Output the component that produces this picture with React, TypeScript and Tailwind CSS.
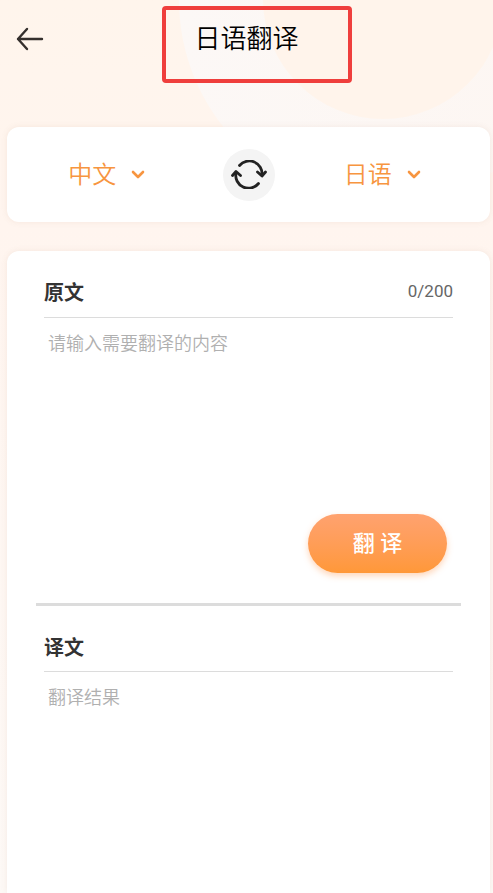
import { useState } from 'react';

const LANGUAGES = ['中文', '日语', '英语', '韩语'];
const MAX_LENGTH = 200;

interface LanguageSelectProps {
  label: string;
  value: string;
  onChange: (value: string) => void;
}

function LanguageSelect({ label, value, onChange }: LanguageSelectProps) {
  return (
    <div className="relative flex items-center">
      <select
        aria-label={label}
        value={value}
        onChange={(e) => onChange(e.target.value)}
        className="w-[77px] appearance-none bg-transparent text-2xl font-[350] text-[#f79540] focus:outline-none"
      >
        {LANGUAGES.map((language) => (
          <option key={language} value={language}>
            {language}
          </option>
        ))}
      </select>
      <svg viewBox="0 0 14 9" fill="none" className="pointer-events-none absolute right-0 w-3.5" aria-hidden="true">
        <path d="M2 2l5 5 5-5" stroke="#f79540" strokeWidth="2.6" strokeLinecap="round" strokeLinejoin="round" />
      </svg>
    </div>
  );
}

export default function App() {
  const [source, setSource] = useState('中文');
  const [target, setTarget] = useState('日语');
  const [text, setText] = useState('');

  const swapLanguages = () => {
    setSource(target);
    setTarget(source);
  };

  return (
    <div className="relative flex min-h-screen flex-col overflow-hidden bg-linear-to-b from-[#fff5ec] via-[#fff5ef] via-25% to-[#fdf9f6] font-['Roboto','Noto_Sans_CJK_SC',sans-serif]">
      {/* Background circles */}
      <svg className="pointer-events-none absolute top-0 right-0 h-52 w-80" viewBox="0 0 320 208" aria-hidden="true">
        <defs>
          <linearGradient id="halo" x1="0" y1="0" x2="1" y2="0">
            <stop offset="0" stopColor="#fcf8f6" />
            <stop offset="1" stopColor="#fdf6f2" />
          </linearGradient>
        </defs>
        <circle cx="210" cy="0" r="204" fill="url(#halo)" />
        <circle cx="210" cy="-1" r="120" fill="#fff4eb" />
      </svg>

      {/* Header */}
      <header className="relative grid h-[78px] grid-cols-[1fr_auto_1fr] items-center px-4">
        <button type="button" aria-label="返回" className="w-7">
          <svg viewBox="0 0 28 24" fill="none" stroke="#35302d" strokeWidth="2.4" strokeLinecap="round" strokeLinejoin="round">
            <path d="M11 2L2 12l9 10M2 12h24" />
          </svg>
        </button>
        <div className="relative">
          <h1 className="text-[26px] leading-8 font-[350] text-black">日语翻译</h1>
          <div className="pointer-events-none absolute -top-[17px] -right-[53px] -bottom-7 -left-8 rounded-sm border-4 border-[#ef3e3c]" />
        </div>
      </header>

      <main className="relative flex flex-1 flex-col gap-[29px] pt-[49px] pr-[3px] pl-[7px]">
        {/* Language bar */}
        <section className="grid h-[95px] grid-cols-[1fr_auto_1fr] items-center rounded-xl bg-white shadow-[0_0_6px_rgba(160,110,80,0.1)]">
          <div className="flex justify-center pr-4">
            <LanguageSelect label="源语言" value={source} onChange={setSource} />
          </div>
          <button
            type="button"
            aria-label="交换语言"
            onClick={swapLanguages}
            className="flex size-13 items-center justify-center rounded-full bg-[#f4f4f4]"
          >
            <svg viewBox="0 0 36 29" fill="none" stroke="#222" strokeWidth="2.8" strokeLinecap="round" strokeLinejoin="round" className="w-9">
              <path d="M8.500 5.500A12.800 12.800 0 0 1 31 15" />
              <path d="M26.500 12L31 16L34.500 12" />
              <path d="M27.500 23.500A12.800 12.800 0 0 1 5 13" />
              <path d="M1.500 15.500L5 11.500L9.500 15.500" />
            </svg>
          </button>
          <div className="flex justify-center">
            <LanguageSelect label="目标语言" value={target} onChange={setTarget} />
          </div>
        </section>

        {/* Translation card */}
        <section className="flex-1 rounded-t-xl bg-white px-[29px] pt-6 shadow-[0_0_6px_rgba(160,110,80,0.1)]">
          <div className="px-2">
            <div className="flex h-[43px] items-start justify-between border-b border-[#dcdcdc]">
              <label htmlFor="source" className="text-xl leading-9 font-bold text-[#333]">
                原文
              </label>
              <span className="text-[17px] leading-8 text-[#666]">
                {text.length}/{MAX_LENGTH}
              </span>
            </div>
            <textarea
              id="source"
              maxLength={MAX_LENGTH}
              value={text}
              onChange={(e) => setText(e.target.value)}
              placeholder="请输入需要翻译的内容"
              className="block h-[196px] w-full resize-none px-1 py-3 text-lg font-[350] text-[#333] placeholder:text-[#b0b0b0] focus:outline-none"
            />
            <div className="flex justify-end pr-1.5">
              <button
                type="button"
                className="h-[59px] w-[139px] rounded-full bg-linear-to-b from-[#ffa26f] to-[#ff9838] text-[22px] font-medium text-white shadow-[0_3px_6px_rgba(255,140,60,0.35)]"
              >
                翻 译
              </button>
            </div>
          </div>

          <hr className="mt-[30px] border-t-3 border-[#dcdcdc]" />

          <div className="px-2 pt-6">
            <h2 className="h-[42px] border-b border-[#dcdcdc] text-xl leading-9 font-bold text-[#333]">译文</h2>
            <p className="px-1 py-3 text-lg font-[350] text-[#b0b0b0]">翻译结果</p>
          </div>
        </section>
      </main>
    </div>
  );
}
